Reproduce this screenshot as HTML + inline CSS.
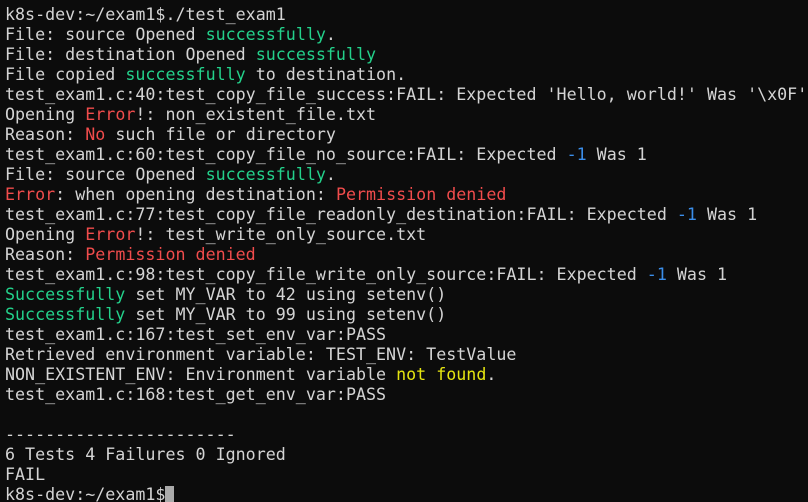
<!DOCTYPE html>
<html><head><style>
html,body{margin:0;padding:0;background:#0c0c0c;width:808px;height:502px;overflow:hidden}
pre{margin:0;padding:5px 0 0 5px;font-family:"DejaVu Sans Mono","Liberation Mono",monospace;font-size:16.67px;line-height:20px;color:#d4d4d4;white-space:pre}
.g{color:#23d18b}.r{color:#f14c4c}.b{color:#3b8eea}.y{color:#e5e510}
.c{display:inline-block;width:9px;height:18px;background:#aaaaaa;vertical-align:-4px}
</style></head><body><pre>k8s-dev:~/exam1$./test_exam1
File: source Opened <span class="g">successfully</span>.
File: destination Opened <span class="g">successfully</span>
File copied <span class="g">successfully</span> to destination.
test_exam1.c:40:test_copy_file_success:FAIL: Expected 'Hello, world!' Was '\x0F'
Opening <span class="r">Error</span>!: non_existent_file.txt
Reason: <span class="r">No</span> such file or directory
test_exam1.c:60:test_copy_file_no_source:FAIL: Expected <span class="b">-1</span> Was 1
File: source Opened <span class="g">successfully</span>.
<span class="r">Error</span>: when opening destination: <span class="r">Permission denied</span>
test_exam1.c:77:test_copy_file_readonly_destination:FAIL: Expected <span class="b">-1</span> Was 1
Opening <span class="r">Error</span>!: test_write_only_source.txt
Reason: <span class="r">Permission denied</span>
test_exam1.c:98:test_copy_file_write_only_source:FAIL: Expected <span class="b">-1</span> Was 1
<span class="g">Successfully</span> set MY_VAR to 42 using setenv()
<span class="g">Successfully</span> set MY_VAR to 99 using setenv()
test_exam1.c:167:test_set_env_var:PASS
Retrieved environment variable: TEST_ENV: TestValue
NON_EXISTENT_ENV: Environment variable <span class="y">not found</span>.
test_exam1.c:168:test_get_env_var:PASS

-----------------------
6 Tests 4 Failures 0 Ignored
FAIL
k8s-dev:~/exam1$<span class="c"></span></pre></body></html>
